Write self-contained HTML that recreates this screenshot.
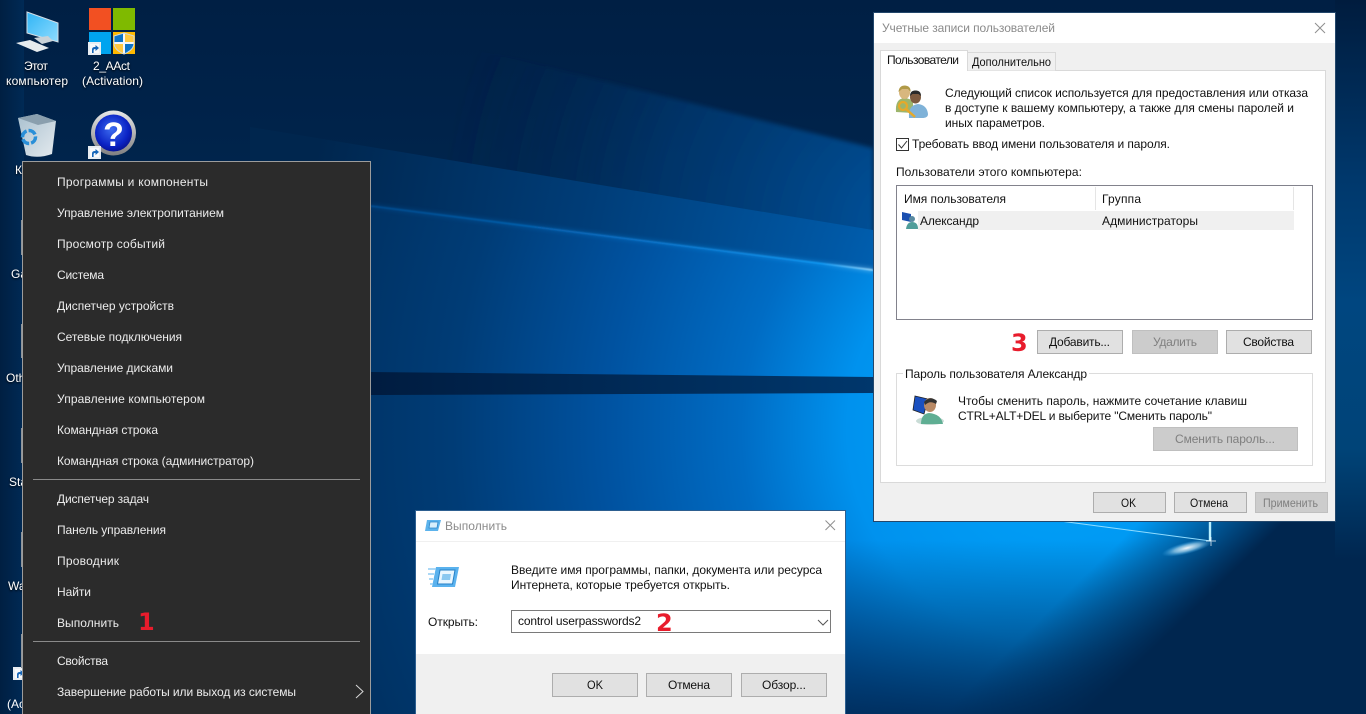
<!DOCTYPE html>
<html lang="ru"><head><meta charset="utf-8"><title>Windows 10</title>
<style>
html,body{margin:0;padding:0;width:1366px;height:714px;overflow:hidden;background:#002a55}
svg{display:block;position:absolute;left:0;top:0;overflow:hidden}
text{font-family:"Liberation Sans",sans-serif;font-size:12px;fill:#111}
.m text{fill:#ececec}
.g text{fill:#8a8a8a}
.d text{fill:#7f7f7f}
.w text{fill:#fff}
.w{filter:drop-shadow(0 1px 1px rgba(0,0,0,.9))}
.r{font-family:"DejaVu Sans",sans-serif;font-weight:bold;font-size:24px;fill:#e81c2c}
</style></head><body>
<svg width="1366" height="714" viewBox="0 0 1366 714" xmlns="http://www.w3.org/2000/svg">
<defs>
<linearGradient id="base" x1="0" y1="0" x2="0" y2="1"><stop offset="0" stop-color="#001f44"/><stop offset=".5" stop-color="#002a55"/><stop offset="1" stop-color="#00254c"/></linearGradient>
<radialGradient id="top" gradientUnits="userSpaceOnUse" cx="920" cy="230" r="480"><stop offset="0" stop-color="#0056a2"/><stop offset=".55" stop-color="#003a74" stop-opacity=".7"/><stop offset="1" stop-color="#002650" stop-opacity="0"/></radialGradient>
<radialGradient id="bandA" gradientUnits="userSpaceOnUse" cx="1000" cy="300" r="700"><stop offset="0" stop-color="#0072cc"/><stop offset=".25" stop-color="#0058a5"/><stop offset=".6" stop-color="#003d78"/><stop offset="1" stop-color="#00264e"/></radialGradient>
<radialGradient id="bandB" gradientUnits="userSpaceOnUse" cx="1060" cy="430" r="760"><stop offset="0" stop-color="#00a4fa"/><stop offset=".28" stop-color="#0092ee"/><stop offset=".42" stop-color="#006cc4"/><stop offset=".6" stop-color="#0052a0"/><stop offset=".8" stop-color="#003c76"/><stop offset="1" stop-color="#003060"/></radialGradient>
<linearGradient id="dark" gradientUnits="userSpaceOnUse" x1="370" y1="0" x2="873" y2="0"><stop offset="0" stop-color="#001c40"/><stop offset="1" stop-color="#00376c"/></linearGradient>
<linearGradient id="ray" gradientUnits="userSpaceOnUse" x1="370" y1="0" x2="873" y2="0"><stop offset="0" stop-color="#004f96"/><stop offset=".5" stop-color="#0a78d0"/><stop offset=".9" stop-color="#18a0fa"/><stop offset="1" stop-color="#a8e0ff"/></linearGradient>
<linearGradient id="strip" gradientUnits="userSpaceOnUse" x1="0" y1="0" x2="0" y2="560"><stop offset="0" stop-color="#001c3e"/><stop offset=".32" stop-color="#00386c"/><stop offset=".54" stop-color="#004680"/><stop offset=".8" stop-color="#004478"/><stop offset="1" stop-color="#00264f"/></linearGradient>
<linearGradient id="bot" gradientUnits="userSpaceOnUse" x1="0" y1="540" x2="0" y2="714"><stop offset="0" stop-color="#00254c" stop-opacity="0"/><stop offset="1" stop-color="#00224a" stop-opacity=".8"/></linearGradient>
<linearGradient id="edge" gradientUnits="userSpaceOnUse" x1="1079" y1="581" x2="1149" y2="653"><stop offset="0" stop-color="#00264f" stop-opacity="0"/><stop offset="1" stop-color="#00264f"/></linearGradient>
<linearGradient id="left" x1="0" y1="0" x2="1" y2="0"><stop offset="0" stop-color="#001f42"/><stop offset="1" stop-color="#002a55"/></linearGradient>
<radialGradient id="fl"><stop offset="0" stop-color="#fff" stop-opacity=".95"/><stop offset=".5" stop-color="#bfeaff" stop-opacity=".6"/><stop offset="1" stop-color="#40b8ff" stop-opacity="0"/></radialGradient>
<linearGradient id="mon" x1="0" y1="0" x2="1" y2="1"><stop offset="0" stop-color="#2fb4f5"/><stop offset="1" stop-color="#8fdcff"/></linearGradient>
<linearGradient id="bin" x1="0" y1="0" x2="1" y2="1"><stop offset="0" stop-color="#a9c0cf"/><stop offset="1" stop-color="#e4eaee"/></linearGradient>
<radialGradient id="q" cx=".45" cy=".4" r=".65"><stop offset="0" stop-color="#3d6cf0"/><stop offset=".7" stop-color="#0a22c4"/><stop offset="1" stop-color="#07108a"/></radialGradient>
<linearGradient id="ring" x1="0" y1="0" x2="0" y2="1"><stop offset="0" stop-color="#e8e8e8"/><stop offset="1" stop-color="#808080"/></linearGradient>
<filter id="b1"><feGaussianBlur stdDeviation=".7"/></filter>
<filter id="b2"><feGaussianBlur stdDeviation="2"/></filter>
<clipPath id="sh"><path d="M124 33L134 36V43Q134 50 124 54 114 50 114 43V36Z"/></clipPath>
<g id="sc"><rect width="13" height="13" fill="#e8edf2"/><rect x="2" y="2" width="9" height="9" fill="#f7f9fb"/><path d="M4 11V7.500Q4 5 7 5H7.500V3L11 6 7.500 9V7H7Q5.600 7 5.600 8.500V11Z" fill="#1565b8"/></g>
</defs>
<!-- wallpaper -->
<rect width="1366" height="714" fill="url(#base)"/>
<path d="M437 40L873 148V235L437 160Z" fill="url(#top)" filter="url(#b2)"/>
<path d="M250 127L371 147 873 230 1366 311V714H250Z" fill="url(#bandA)"/>
<path d="M371 206L873 270 1366 334V714H371Z" fill="url(#bandB)"/>
<path d="M371 372L873 377V393L371 395Z" fill="url(#dark)"/>
<path d="M371 206L873 270" stroke="url(#ray)" stroke-width="4" opacity=".4" filter="url(#b2)" fill="none"/>
<path d="M371 206L873 270" stroke="url(#ray)" stroke-width="1.400" filter="url(#b1)" fill="none"/>
<rect x="845" y="540" width="521" height="174" fill="url(#bot)"/>
<rect x="845" y="521" width="521" height="193" fill="url(#edge)"/>
<rect x="0" y="0" width="24" height="714" fill="url(#left)"/>
<rect x="1335" y="0" width="31" height="560" fill="url(#strip)"/>
<path d="M1060 521L1211 541" stroke="#8fdcff" stroke-width="1" fill="none"/>
<path d="M1210 521V541" stroke="#b8f0ff" stroke-width="2.400" fill="none"/>
<ellipse cx="1187" cy="548" rx="26" ry="6" transform="rotate(-14 1187 548)" fill="url(#fl)"/>
<path d="M1206 541H1216M1211 537V546" stroke="#fff" stroke-width="1" opacity=".7" fill="none"/>

<!-- desktop icons -->
<path d="M27 12L58 23V42L27 33Z" fill="url(#mon)" stroke="#d4dee6" stroke-width="1"/>
<path d="M34 38L48 36 53 41 42 44Z" fill="#c9d2d8"/>
<path d="M16 43L30 40 49 48 37 52Z" fill="#e6ebee"/>
<rect x="89" y="8" width="22" height="22" fill="#f25022"/>
<rect x="113" y="8" width="22" height="22" fill="#7fba00"/>
<rect x="89" y="32" width="22" height="22" fill="#00a4ef"/>
<rect x="113" y="32" width="22" height="22" fill="#ffb900"/>
<g clip-path="url(#sh)">
<rect x="113" y="32" width="11" height="11" fill="#0b73c8"/><rect x="124" y="32" width="11" height="11" fill="#ffc840"/>
<rect x="113" y="43" width="11" height="11" fill="#ffc840"/><rect x="124" y="43" width="11" height="11" fill="#0b73c8"/>
<path d="M124 32V54M113 43H135" stroke="#f2f6fa" stroke-width="2" fill="none"/>
</g>
<path d="M124 33L134 36V43Q134 50 124 54 114 50 114 43V36Z" fill="none" stroke="#cfd8de" stroke-width="1"/>
<use href="#sc" x="88" y="42"/>
<path d="M18 118L37 114 56 121 52 154Q38 159 26 155Z" fill="url(#bin)"/>
<path d="M18 118L37 114 56 121 38 125Z" fill="#8a9fae"/>
<circle cx="29" cy="137" r="6.500" fill="none" stroke="#2a8fd8" stroke-width="3.500" stroke-dasharray="8 2"/>
<circle cx="113.500" cy="133" r="22.500" fill="url(#ring)"/>
<circle cx="113.500" cy="133" r="18.500" fill="url(#q)"/>
<text x="113.500" y="146" text-anchor="middle" style="font-size:34px;font-weight:bold;fill:#fff">?</text>
<use href="#sc" x="88" y="146"/>
<g class="w">
<text x="24" y="70" textLength="24">Этот</text>
<text x="6" y="85" textLength="62">компьютер</text>
<text x="93" y="70" textLength="37">2_AAct</text>
<text x="82" y="85" textLength="61">(Activation)</text>
<text x="15" y="174">К</text>
<text x="11" y="278">Ga</text>
<text x="6" y="382">Oth</text>
<text x="9" y="486">Sta</text>
<text x="8" y="590">Wa</text>
</g>
<text x="7" y="708" style="fill:#fff">(Ac</text>
<use href="#sc" x="13" y="667"/>
<g fill="#8f9499"><rect x="21" y="220" width="1" height="35"/><rect x="21" y="324" width="1" height="34"/><rect x="21" y="428" width="1" height="35"/><rect x="21" y="532" width="1" height="35"/><rect x="21" y="634" width="1" height="34"/></g>

<!-- context menu -->
<rect x="22" y="161" width="349" height="553" fill="#9c9c9c"/>
<rect x="23" y="162" width="347" height="552" fill="#2b2b2b"/>
<g class="m">
<text x="57" y="186" textLength="151">Программы и компоненты</text>
<text x="57" y="217" textLength="167">Управление электропитанием</text>
<text x="57" y="248" textLength="108">Просмотр событий</text>
<text x="57" y="279" textLength="47">Система</text>
<text x="57" y="310" textLength="117">Диспетчер устройств</text>
<text x="57" y="341" textLength="125">Сетевые подключения</text>
<text x="57" y="372" textLength="116">Управление дисками</text>
<text x="57" y="403" textLength="148">Управление компьютером</text>
<text x="57" y="434" textLength="101">Командная строка</text>
<text x="57" y="465" textLength="197">Командная строка (администратор)</text>
<text x="57" y="503" textLength="92">Диспетчер задач</text>
<text x="57" y="534" textLength="109">Панель управления</text>
<text x="57" y="565" textLength="62">Проводник</text>
<text x="57" y="596" textLength="34">Найти</text>
<text x="57" y="627" textLength="62">Выполнить</text>
<text x="57" y="665" textLength="51">Свойства</text>
<text x="57" y="696" textLength="239">Завершение работы или выход из системы</text>
</g>
<rect x="33" y="479" width="327" height="1" fill="#8a8a8a"/>
<rect x="33" y="641" width="327" height="1" fill="#8a8a8a"/>
<path d="M356 685L363 691.500 356 698" fill="none" stroke="#d8d8d8" stroke-width="1"/>
<text class="r" x="138" y="630">1</text>

<!-- run dialog -->
<rect x="415" y="510" width="431" height="204" fill="#2d5f90"/>
<rect x="416" y="511" width="429" height="203" fill="#fff"/>
<rect x="416" y="541" width="429" height="1" fill="#f0f0f0"/>
<rect x="416" y="654" width="429" height="60" fill="#f0f0f0"/>
<path d="M427 520H441L438 531H425Z" fill="#5cb3ec"/><path d="M430 522H438L437 528H429Z" fill="#d8effc" stroke="#2f87c9" stroke-width=".8"/>
<g class="g"><text x="445" y="530" textLength="62">Выполнить</text></g>
<path d="M825.500 520.500L835 530M835 520.500L825.500 530" stroke="#8f8f8f" stroke-width="1" fill="none"/>
<path d="M436 567H459L455 587H432Z" fill="#5ab2ee"/>
<path d="M440 570H455L452.500 584H437.500Z" fill="#e8f6ff" stroke="#2680c6" stroke-width="1"/>
<path d="M442.500 574H451L450 580H441.500Z" fill="#8ac8f0"/>
<path d="M428 569H436M428 574H434M429 579H433M430 584H433" stroke="#8fccf4" stroke-width="1.500" fill="none"/>
<text x="511" y="574" textLength="311">Введите имя программы, папки, документа или ресурса</text>
<text x="511" y="589" textLength="219">Интернета, которые требуется открыть.</text>
<text x="428" y="626" textLength="50">Открыть:</text>
<rect x="511.500" y="610.500" width="319" height="22" fill="#fff" stroke="#7a7a7a"/>
<text x="518" y="625" textLength="123">control userpasswords2</text>
<path d="M818 620L823 625 828 620" fill="none" stroke="#555" stroke-width="1"/>
<text class="r" x="656" y="631">2</text>
<rect x="552.500" y="673.500" width="85" height="23" fill="#e1e1e1" stroke="#adadad"/>
<rect x="646.500" y="673.500" width="85" height="23" fill="#e1e1e1" stroke="#adadad"/>
<rect x="741.500" y="673.500" width="85" height="23" fill="#e1e1e1" stroke="#adadad"/>
<text x="587" y="689" textLength="16" lengthAdjust="spacingAndGlyphs">OK</text>
<text x="668" y="689" textLength="42">Отмена</text>
<text x="762" y="689" textLength="44">Обзор...</text>

<!-- user accounts dialog -->
<rect x="873.500" y="12.500" width="462" height="509" fill="#f0f0f0" stroke="#23476b"/>
<rect x="874" y="13" width="461" height="30" fill="#fff"/>
<g class="g"><text x="882" y="32" textLength="173">Учетные записи пользователей</text></g>
<path d="M1315 23L1325 33M1325 23L1315 33" stroke="#8f8f8f" stroke-width="1" fill="none"/>
<rect x="880.500" y="70.500" width="445" height="412" fill="#fff" stroke="#d9d9d9"/>
<path d="M967.500 70.500V52.500H1055.500V70.500" fill="#f0f0f0" stroke="#d9d9d9"/>
<path d="M880.500 71V50.500H967.500V71" fill="#fff" stroke="#d9d9d9"/>
<rect x="881" y="70" width="86" height="2" fill="#fff"/>
<text x="887" y="64" textLength="72">Пользователи</text>
<text x="972" y="66" textLength="79" lengthAdjust="spacingAndGlyphs">Дополнительно</text>

<!-- users icon -->
<path d="M896 112Q895 99 904 98 911 98 913 103V113Z" fill="#9db56b"/>
<ellipse cx="904.500" cy="92.500" rx="5.500" ry="6.500" fill="#d8b77e"/>
<path d="M898.500 92Q899 85.500 905 85.500 911 86 910.500 92L908 89H902Z" fill="#b09a48"/>
<path d="M909 118Q908 105 918 104 927 105 928 114 928 118 922 118Z" fill="#7fb2d8"/>
<ellipse cx="915.500" cy="97" rx="5.500" ry="6.500" fill="#7d5a3f"/>
<path d="M910 96Q910 90.500 915.500 90.500 921 90.500 921 96L918.500 94H912.500Z" fill="#2a2a2a"/>
<circle cx="903" cy="106" r="4" fill="none" stroke="#e6a92a" stroke-width="2.200"/>
<path d="M906 109L915 117" stroke="#e6a92a" stroke-width="2.500" fill="none"/>

<text x="945" y="97" textLength="363">Следующий список используется для предоставления или отказа</text>
<text x="945" y="112" textLength="349">в доступе к вашему компьютеру, а также для смены паролей и</text>
<text x="945" y="127" textLength="100">иных параметров.</text>
<rect x="896.500" y="138.500" width="12" height="12" fill="#fff" stroke="#333"/>
<path d="M898.500 144.500L901.500 148 907 141" fill="none" stroke="#333" stroke-width="1"/>
<text x="912" y="148" textLength="258">Требовать ввод имени пользователя и пароля.</text>
<text x="896" y="176" textLength="186">Пользователи этого компьютера:</text>
<rect x="896.500" y="185.500" width="416" height="134" fill="#fff" stroke="#82828c"/>
<rect x="1095" y="187" width="1" height="23" fill="#e5e5e5"/>
<rect x="1293" y="187" width="1" height="23" fill="#e5e5e5"/>
<rect x="918" y="211" width="376" height="19" fill="#f0f0f0"/>
<text x="904" y="203" textLength="102">Имя пользователя</text>
<text x="1102" y="203" textLength="39">Группа</text>
<path d="M902 212L911 214V222L902 220Z" fill="#1a4fb0"/>
<circle cx="912" cy="219" r="3" fill="#5a8aa0"/><path d="M906 229Q907 222 912 222 918 222 918 229Z" fill="#4f9d9a"/>
<text x="920" y="225" textLength="59">Александр</text>
<text x="1102" y="225" textLength="96">Администраторы</text>
<text class="r" x="1011" y="351">3</text>
<rect x="1037.500" y="330.500" width="85" height="23" fill="#e1e1e1" stroke="#adadad"/>
<rect x="1132.500" y="330.500" width="85" height="23" fill="#ccc" stroke="#bfbfbf"/>
<rect x="1226.500" y="330.500" width="85" height="23" fill="#e1e1e1" stroke="#adadad"/>
<text x="1049" y="346" textLength="61">Добавить...</text>
<g class="d"><text x="1153" y="346" textLength="44">Удалить</text></g>
<text x="1243" y="346" textLength="51">Свойства</text>
<rect x="896.500" y="373.500" width="416" height="92" fill="#fff" stroke="#dcdcdc"/>
<rect x="903" y="370" width="186" height="8" fill="#fff"/>
<text x="905" y="378" textLength="182">Пароль пользователя Александр</text>
<!-- user icon 2 -->
<path d="M915 396L928 399 924 414 913 410Z" fill="#1a50c0" stroke="#222" stroke-width=".8"/>
<ellipse cx="930" cy="421" rx="14" ry="4" fill="#c9dcd6"/>
<path d="M921 424Q921 414 929 413 941 414 943 424Z" fill="#5fae93"/>
<ellipse cx="930" cy="405" rx="6" ry="7" fill="#b98a66"/><path d="M924 402Q930 395 937 401L936 404Q930 400 925 405Z" fill="#333"/>
<text x="958" y="405" textLength="289">Чтобы сменить пароль, нажмите сочетание клавиш</text>
<text x="958" y="420" textLength="254">CTRL+ALT+DEL и выберите "Сменить пароль"</text>
<rect x="1153.500" y="427.500" width="144" height="23" fill="#ccc" stroke="#bfbfbf"/>
<g class="d"><text x="1175" y="443" textLength="100">Сменить пароль...</text></g>
<rect x="1093.500" y="492.500" width="72" height="20" fill="#e1e1e1" stroke="#adadad"/>
<rect x="1174.500" y="492.500" width="72" height="20" fill="#e1e1e1" stroke="#adadad"/>
<rect x="1255.500" y="492.500" width="72" height="20" fill="#ccc" stroke="#bfbfbf"/>
<text x="1121" y="507" textLength="15" lengthAdjust="spacingAndGlyphs">OK</text>
<text x="1190" y="507" textLength="38" lengthAdjust="spacingAndGlyphs">Отмена</text>
<g class="d"><text x="1263" y="507" textLength="55" lengthAdjust="spacingAndGlyphs">Применить</text></g>
</svg>
</body></html>
